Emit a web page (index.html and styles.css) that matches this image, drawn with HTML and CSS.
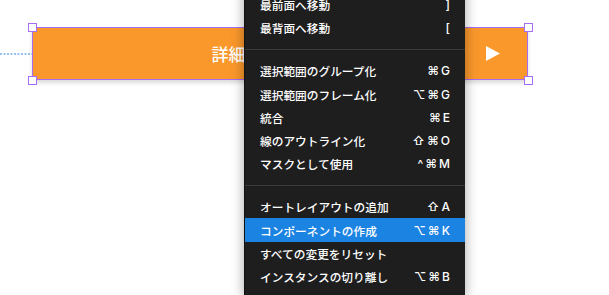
FILE: index.html
```html
<!DOCTYPE html>
<html lang="ja">
  <head>
    <meta charset="UTF-8" />
    <meta name="viewport" content="width=device-width, initial-scale=1.0" />
    <title>コンテキストメニュー</title>
    <link rel="stylesheet" href="styles.css">
  </head>
  <body>
    <div class="canvas">
      <div class="frame">
        <svg class="guide" width="32" height="2" viewBox="0 0 32 2">
          <line x1="0" y1="1" x2="32" y2="1" stroke="#2f8ae6" stroke-width="1.2" stroke-dasharray="2 1.5" />
        </svg>
        <div class="btn">
          <span class="btn-label">詳細を見る</span>
          <svg class="btn-arrow" width="14" height="15" viewBox="0 0 14 15">
            <polygon points="0,0 14,7.5 0,15" fill="#fff" />
          </svg>
          <i class="handle tl"></i>
          <i class="handle tr"></i>
          <i class="handle bl"></i>
          <i class="handle br"></i>
        </div>
      </div>

      <div class="menu">
        <div class="menu-item"><span>最前面へ移動</span><span class="key">]</span></div>
        <div class="menu-item"><span>最背面へ移動</span><span class="key">[</span></div>
        <div class="menu-sep"></div>
        <div class="menu-item"><span>選択範囲のグループ化</span><span class="key">⌘G</span></div>
        <div class="menu-item"><span>選択範囲のフレーム化</span><span class="key">⌥⌘G</span></div>
        <div class="menu-item"><span>統合</span><span class="key">⌘E</span></div>
        <div class="menu-item"><span>線のアウトライン化</span><span class="key">⇧⌘O</span></div>
        <div class="menu-item"><span>マスクとして使用</span><span class="key">^⌘M</span></div>
        <div class="menu-sep"></div>
        <div class="menu-item"><span>オートレイアウトの追加</span><span class="key">⇧A</span></div>
        <div class="menu-item active"><span>コンポーネントの作成</span><span class="key">⌥⌘K</span></div>
        <div class="menu-item"><span>すべての変更をリセット</span><span class="key"></span></div>
        <div class="menu-item"><span>インスタンスの切り離し</span><span class="key">⌥⌘B</span></div>
      </div>
    </div>
  </body>
</html>
```

FILE: styles.css
```css
* {
  margin: 0;
  padding: 0;
  box-sizing: border-box;
}
html,
body {
  height: 100%;
  overflow: hidden;
}
body {
  background: #fff;
  font-family: "Noto Sans CJK JP", sans-serif;
}
.canvas {
  position: relative;
  height: 100%;
}

/* 選択中のボタン */
.frame {
  display: flex;
  align-items: center;
  padding-top: 27px;
}
.guide {
  display: block;
  flex: none;
}
.btn {
  position: relative;
  width: 496px;
  height: 53px;
  display: flex;
  align-items: center;
  background: #fa982c;
  border: 1.5px solid #a66df1;
  box-shadow: 0 3px 4px rgba(0, 0, 0, 0.14);
  color: #fff;
}
.btn-label {
  flex: 1;
  text-align: center;
  padding-right: 11px;
  font-size: 17px;
  font-weight: 500;
  line-height: 1;
}
.btn-arrow {
  display: block;
  margin-right: 27px;
}
.handle {
  position: absolute;
  width: 9px;
  height: 9px;
  background: #fff;
  border: 1.5px solid #a66df1;
}
.tl {
  left: -5.5px;
  top: -5.5px;
}
.tr {
  right: -5.5px;
  top: -5.5px;
}
.bl {
  left: -5.5px;
  bottom: -5.5px;
}
.br {
  right: -5.5px;
  bottom: -5.5px;
}

/* 右クリックメニュー */
.menu {
  position: absolute;
  left: 244px;
  top: -15px;
  width: 221px;
  padding: 8px 0;
  background: #1e1e1e;
  border-left: 1px solid #111;
  box-shadow: 0 2px 12px rgba(0, 0, 0, 0.35);
  color: #fff;
}
.menu-item {
  height: 23.3px;
  display: flex;
  justify-content: space-between;
  align-items: center;
  padding: 0 15px 0 15px;
  font-size: 11.7px;
  font-weight: 500;
}
.menu-item.active {
  background: #1b83e2;
}
.key {
  font-family: "Inter", "DejaVu Sans", sans-serif;
  font-size: 12px;
  font-weight: 500;
  letter-spacing: 2px;
  margin-right: -2px;
}
.menu-sep {
  height: 1px;
  margin: 9.25px 0;
  background: #3a3a3a;
}
```
